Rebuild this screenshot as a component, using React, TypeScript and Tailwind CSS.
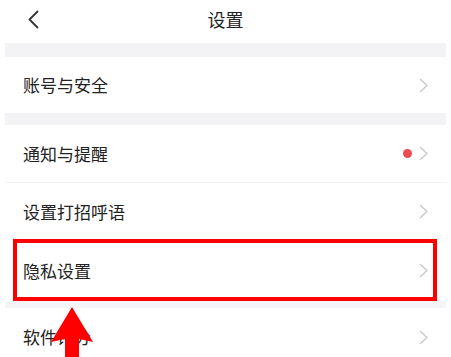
import React from "react";

function Chevron() {
  return (
    <svg width="10" height="15" viewBox="0 0 10 15" fill="none">
      <path d="M1.5 1.5 L8 7.5 L1.5 13.5" stroke="#c6c6c8" strokeWidth="1.3" strokeLinecap="round" strokeLinejoin="round" />
    </svg>
  );
}

function Row({ label, height, dot, divider }: { label: string; height: string; dot?: boolean; divider?: boolean }) {
  return (
    <div className={`flex items-center justify-between bg-white pl-[18px] pr-[17px] ${height} ${divider ? "border-b border-[#f1f1f3]" : ""}`}>
      <span className="text-[17px] text-[#222]">{label}</span>
      <div className="flex items-center gap-[7px]">
        {dot && <span className="block w-[9px] h-[9px] rounded-full bg-[#ee4a52]" />}
        <Chevron />
      </div>
    </div>
  );
}

export default function App() {
  return (
    <div className="relative w-[451px] h-[357px] overflow-hidden bg-white font-['Noto_Sans_CJK_SC','Noto_Sans',sans-serif]">
      {/* Header */}
      <div className="relative flex h-[43px] items-center justify-center">
        <svg className="absolute left-[27px] top-[10px]" width="13" height="19" viewBox="0 0 13 19" fill="none">
          <path d="M10.5 1.5 L2.5 9.5 L10.5 17.5" stroke="#333" strokeWidth="1.8" strokeLinecap="round" strokeLinejoin="round" />
        </svg>
        <span className="text-[18px] text-[#222] -mt-[5px]">设置</span>
      </div>

      {/* List */}
      <div className="mx-[5px]">
        <div className="h-[14px] bg-[#f3f3f5]" />
        <Row label="账号与安全" height="h-[56px]" />
        <div className="h-[12px] bg-[#f3f3f5]" />
        <Row label="通知与提醒" height="h-[58px]" dot divider />
        <Row label="设置打招呼语" height="h-[57px]" />
        <Row label="隐私设置" height="h-[61px]" />
        <div className="h-[7px] bg-[#f5f5f7]" />
        <Row label="软件评分" height="h-[58px]" />
      </div>

      {/* Highlight box */}
      <div className="absolute left-[13px] top-[239px] h-[62px] w-[424px] border-4 border-[#ff0000]" />

      {/* Arrow */}
      <svg className="absolute left-0 top-0" width="451" height="357" viewBox="0 0 451 357">
        <polygon points="72,307 93,342 79,339 79,357 65,357 65,339 51,342" fill="#ff0000" />
      </svg>
    </div>
  );
}
